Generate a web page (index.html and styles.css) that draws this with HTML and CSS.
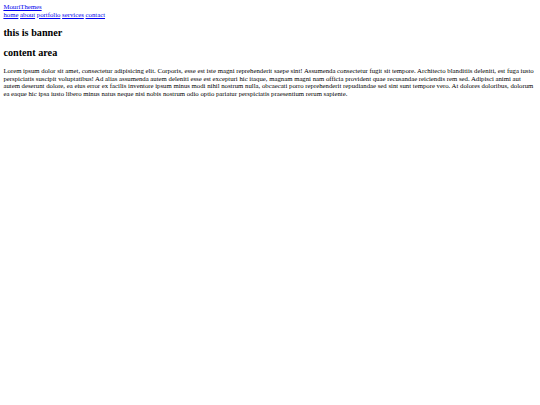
FILE: index.html
```html
<!DOCTYPE html>
<html>
<head>
<meta charset="utf-8">
<title>MouriThemes</title>
<link rel="stylesheet" href="styles.css">
</head>
<body>
<header class="site-header">
  <div class="logo"><a href="#">MouriThemes</a></div>
  <nav class="main-nav">
    <a href="#">home</a>
    <a href="#">about</a>
    <a href="#">portfolio</a>
    <a href="#">services</a>
    <a href="#">contact</a>
  </nav>
</header>
<section class="banner">
  <h2 class="section-title">this is banner</h2>
</section>
<section class="content">
  <h2 class="section-title">content area</h2>
  <p class="text">Lorem ipsum dolor sit amet, consectetur adipisicing elit. Corporis, esse est iste magni reprehenderit saepe sint! Assumenda consectetur fugit sit tempore. Architecto blanditiis deleniti, est fuga iusto perspiciatis suscipit voluptatibus! Ad alias assumenda autem deleniti esse est excepturi hic itaque, magnam magni nam officia provident quae recusandae reiciendis rem sed. Adipisci animi aut autem deserunt dolore, ea eius error ex facilis inventore ipsum minus modi nihil nostrum nulla, obcaecati porro reprehenderit repudiandae sed sint sunt tempore vero. At dolores doloribus, dolorum ea eaque hic ipsa iusto libero minus natus neque nisi nobis nostrum odio optio pariatur perspiciatis praesentium rerum sapiente.</p>
</section>
</body>
</html>
```

FILE: styles.css
```css
html {
  background: #ffffff;
}
body {
  margin: 3.4px;
  font-family: "Liberation Serif", "Times New Roman", serif;
  font-size: 6.75px;
  line-height: 7.5px;
  color: #000000;
}
a {
  color: #0000ee;
  text-decoration: underline;
}
.section-title {
  font-size: 10.2px;
  line-height: 11.6px;
  font-weight: bold;
  margin: 8.6px 0;
}
.text {
  margin: 8.6px 0;
}
```
